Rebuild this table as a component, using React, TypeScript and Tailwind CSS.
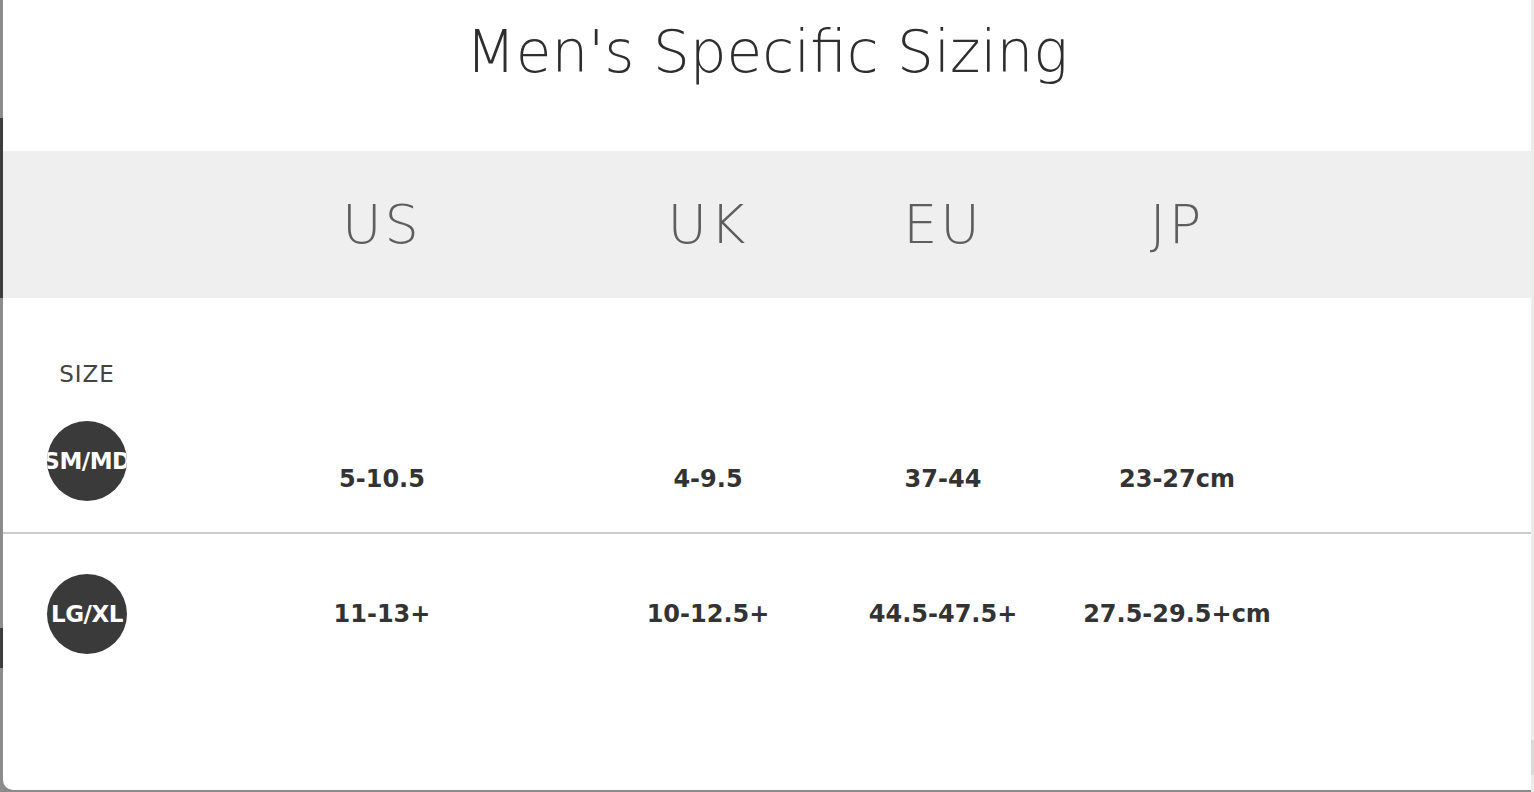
import React from "react";

const font = { fontFamily: '"DejaVu Sans", "Open Sans", sans-serif' };

const rows = [
  { size: "SM/MD", us: "5-10.5", uk: "4-9.5", eu: "37-44", jp: "23-27cm" },
  { size: "LG/XL", us: "11-13+", uk: "10-12.5+", eu: "44.5-47.5+", jp: "27.5-29.5+cm" },
];

const cols = "grid grid-cols-[168px_422px_230px_240px_228px_1fr]";

const SizeBadge = ({ label }: { label: string }) => (
  <div className="w-[80px] h-[80px] rounded-full bg-[#3a3a3a] overflow-hidden flex items-center justify-center">
    <span className="text-white font-bold text-[23px] tracking-[-0.5px] whitespace-nowrap">{label}</span>
  </div>
);

const App = () => {
  return (
    <div className="w-[1534px] h-[792px] flex bg-[#8a8a8a] overflow-hidden" style={font}>
      <div className="w-[3px] h-full flex flex-col">
        <div className="h-[118px] bg-[#8c8c8c]" />
        <div className="h-[180px] bg-[#3d3d3d]" />
        <div className="h-[330px] bg-[#8c8c8c]" />
        <div className="h-[40px] bg-[#3d3d3d]" />
        <div className="flex-1 bg-[#8c8c8c]" />
      </div>

      <div className="w-[1528px] h-[790px] bg-white rounded-bl-[10px] flex flex-col">
        <div className="h-[151px] flex justify-center pt-[9px]">
          <h1 className="text-[58px] font-light text-[#2e2e2e]">Men's Specific Sizing</h1>
        </div>

        <div className={`${cols} h-[147px] bg-[#efefef] items-center text-[#5e5e5e] text-[54px] font-light tracking-[3px]`}>
          <div />
          <div className="text-center">US</div>
          <div className="text-center">UK</div>
          <div className="text-center">EU</div>
          <div className="text-center">JP</div>
          <div />
        </div>

        <div className={`${cols} h-[236px] border-b-2 border-[#cccccc] text-[#333] text-[24px] font-bold`}>
          <div className="flex flex-col items-center pt-[61px]">
            <span className="text-[23px] font-normal text-[#444] leading-[30px] tracking-[1px]">SIZE</span>
            <div className="mt-[32px]">
              <SizeBadge label={rows[0].size} />
            </div>
          </div>
          <div className="self-end text-center mb-[35px]">{rows[0].us}</div>
          <div className="self-end text-center mb-[35px]">{rows[0].uk}</div>
          <div className="self-end text-center mb-[35px]">{rows[0].eu}</div>
          <div className="self-end text-center mb-[35px]">{rows[0].jp}</div>
          <div />
        </div>

        <div className={`${cols} pt-[40px] items-center text-[#333] text-[24px] font-bold`}>
          <div className="flex justify-center">
            <SizeBadge label={rows[1].size} />
          </div>
          <div className="text-center">{rows[1].us}</div>
          <div className="text-center">{rows[1].uk}</div>
          <div className="text-center">{rows[1].eu}</div>
          <div className="text-center">{rows[1].jp}</div>
          <div />
        </div>
      </div>

      <div className="w-[3px] h-full flex flex-col bg-[#ececec]">
        <div className="h-[740px]" />
        <div className="h-[35px] bg-[#d9d9d9]" />
      </div>
    </div>
  );
};

export default App;
